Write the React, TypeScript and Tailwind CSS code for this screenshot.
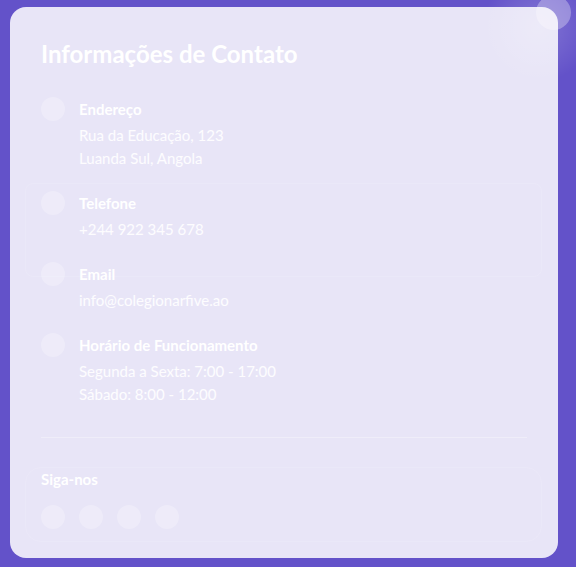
const items = [
  { label: "Endereço", lines: ["Rua da Educação, 123", "Luanda Sul, Angola"] },
  { label: "Telefone", lines: ["+244 922 345 678"] },
  { label: "Email", lines: ["info@colegionarfive.ao"] },
  { label: "Horário de Funcionamento", lines: ["Segunda a Sexta: 7:00 - 17:00", "Sábado: 8:00 - 12:00"] },
];

const App = () => (
  <div
    className="min-h-[567px] w-full bg-[#6352c9] pt-[7px] pl-[10px] pr-[18px] pb-[10px]"
    style={{ fontFamily: "Lato, 'Noto Sans', sans-serif" }}
  >
    <div className="relative rounded-2xl bg-[#e8e5f7] px-[31px] pt-[31px] pb-[29px] text-white">
      {/* corner glow */}
      <div className="pointer-events-none absolute -top-[45px] -right-[45px] h-[130px] w-[130px] rounded-full bg-[radial-gradient(circle,rgba(255,255,255,0.2),transparent_60%)]"></div>
      <div className="pointer-events-none absolute -top-[12px] -right-[13px] h-[35px] w-[35px] rounded-full bg-white/30"></div>

      {/* faint panels */}
      <div className="pointer-events-none absolute left-[15px] right-[16px] top-[176px] h-[94px] rounded-lg border border-white/10"></div>
      <div className="pointer-events-none absolute left-[15px] right-[16px] top-[460px] h-[75px] rounded-2xl border border-white/10"></div>

      <h2 className="relative mb-[27px] text-2xl font-bold leading-8">Informações de Contato</h2>

      <div className="relative flex flex-col gap-[21px]">
        {items.map((item) => (
          <div key={item.label} className="flex items-start gap-[14px]">
            <div className="h-6 w-6 shrink-0 rounded-full bg-white/25"></div>
            <div className="mt-[2px]">
              <div className="mb-[5px] text-[15px] font-bold leading-5">{item.label}</div>
              {item.lines.map((line) => (
                <div key={line} className="text-[15px] leading-[23px] text-white/90">
                  {line}
                </div>
              ))}
            </div>
          </div>
        ))}
      </div>

      <div className="relative mt-[31px] border-t border-white/30 pt-[31px]">
        <div className="mb-[16px] text-[15px] font-bold leading-5">Siga-nos</div>
        <div className="flex gap-[14px]">
          {[0, 1, 2, 3].map((i) => (
            <div key={i} className="h-6 w-6 rounded-full bg-white/25"></div>
          ))}
        </div>
      </div>
    </div>
  </div>
);

export default App;
